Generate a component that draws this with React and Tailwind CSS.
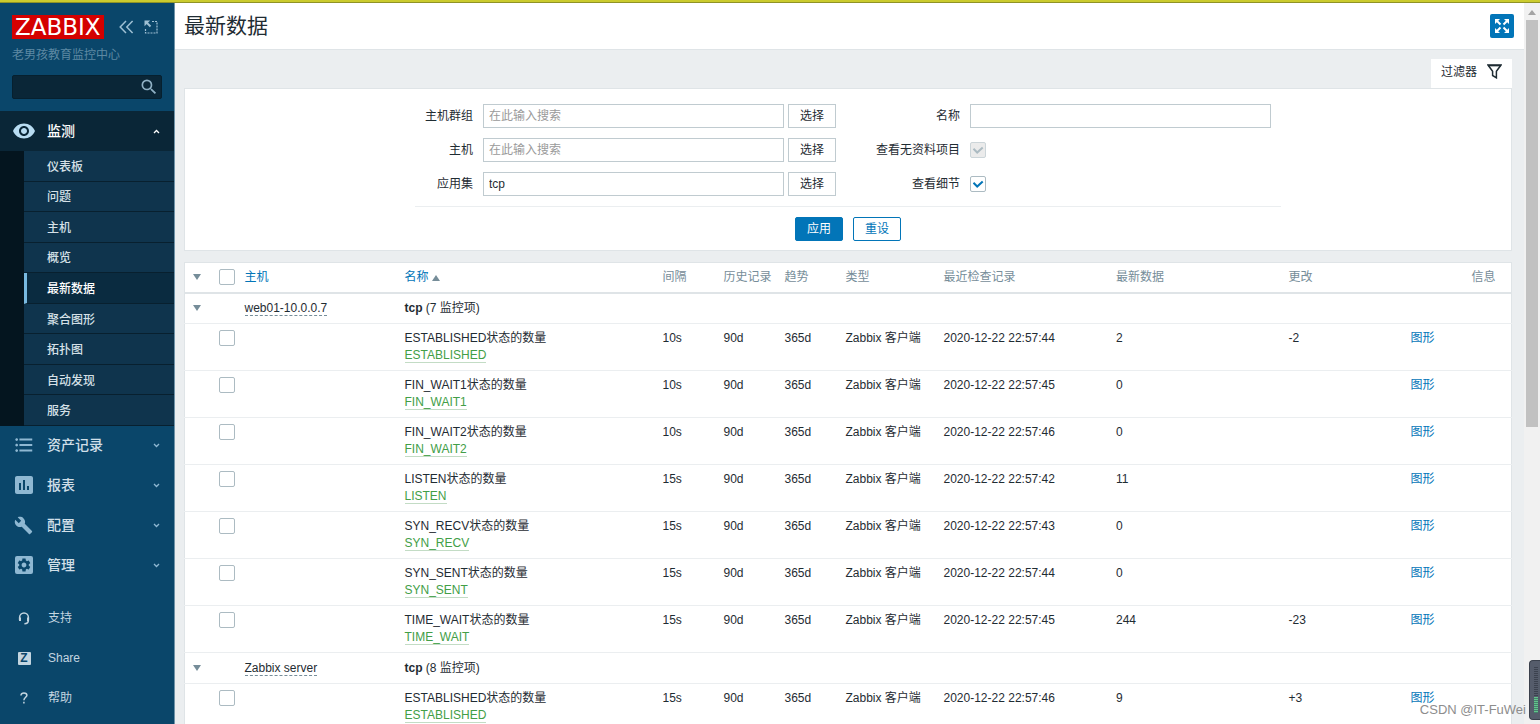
import React, { useState } from 'react';
import clsx from 'clsx';
import {
    MdVisibility,
    MdFormatListBulleted,
    MdAssessment,
    MdBuild,
    MdSettings,
    MdSearch,
} from 'react-icons/md';

const SUB_MENU = ['仪表板', '问题', '主机', '概览', '最新数据', '聚合图形', '拓扑图', '自动发现', '服务'];

const GearIcon = () => (
    <span className="flex size-[18px] items-center justify-center rounded-xs bg-[#8fb8d2] text-[#0a466a]">
        <MdSettings size={16} />
    </span>
);

const MENU = [
    { name: '资产记录', icon: <MdFormatListBulleted size={22} /> },
    { name: '报表', icon: <MdAssessment size={24} /> },
    { name: '配置', icon: <MdBuild size={19} /> },
    { name: '管理', icon: <GearIcon /> },
];

const GROUPS = [
    {
        host: 'web01-10.0.0.7',
        count: 7,
        items: [
            { key: 'ESTABLISHED', interval: '10s', time: '22:57:44', value: '2', change: '-2' },
            { key: 'FIN_WAIT1', interval: '10s', time: '22:57:45', value: '0' },
            { key: 'FIN_WAIT2', interval: '10s', time: '22:57:46', value: '0' },
            { key: 'LISTEN', interval: '15s', time: '22:57:42', value: '11' },
            { key: 'SYN_RECV', interval: '15s', time: '22:57:43', value: '0' },
            { key: 'SYN_SENT', interval: '15s', time: '22:57:44', value: '0' },
            { key: 'TIME_WAIT', interval: '15s', time: '22:57:45', value: '244', change: '-23' },
        ],
    },
    {
        host: 'Zabbix server',
        count: 8,
        items: [
            { key: 'ESTABLISHED', interval: '15s', time: '22:57:46', value: '9', change: '+3' },
        ],
    },
];

const Chevron = ({ up }) => (
    <svg width="7" height="5" viewBox="0 0 7 5" fill="none" stroke="currentColor" strokeWidth="1.3">
        <path d={up ? 'M1 4l2.5-2.5L6 4' : 'M1 1l2.5 2.5L6 1'} />
    </svg>
);

const Triangle = ({ up }) => (
    <svg className="inline-block text-[#768d99]" width="8" height="6" viewBox="0 0 8 6" fill="currentColor">
        <path d={up ? 'M0 6L4 0l4 6z' : 'M0 0h8L4 6z'} />
    </svg>
);

const CollapseIcon = () => (
    <svg width="15" height="14" viewBox="0 0 15 14" fill="none" stroke="currentColor" strokeWidth="1.5">
        <path d="M7 1L1.2 7 7 13M13.6 1L7.8 7l5.8 6" />
    </svg>
);

const HideIcon = () => (
    <svg width="14" height="14" viewBox="0 0 14 14" fill="none" stroke="currentColor">
        <path d="M8 1.5h5V13H1.5V8" strokeWidth="1.2" strokeDasharray="2 1" />
        <path d="M6.5 6.5L2 2" strokeWidth="2" />
        <path d="M.5.5h5.700L.5 6.200z" fill="currentColor" stroke="none" />
    </svg>
);

const HeadsetIcon = () => (
    <svg width="12" height="13" viewBox="0 0 12 13" fill="none" stroke="currentColor" strokeWidth="1.5">
        <path d="M1.6 8V5.500a4.400 4.400 0 018.800 0V8c0 2-1.200 3.800-4 3.800" />
        <path d="M2 5.500v3.500M10 5.500v3.500" strokeWidth="2" />
    </svg>
);

const HelpIcon = () => (
    <svg width="8" height="12" viewBox="0 0 8 12" fill="none" stroke="currentColor" strokeWidth="1.5">
        <path d="M1 3.500C1 1.800 2.200.9 3.900.9S6.900 1.900 6.900 3.300C6.900 5.200 3.900 5.400 3.900 8.200M3.900 9.800v1.700" />
    </svg>
);

const FullscreenIcon = () => (
    <svg width="16" height="16" viewBox="0 0 16 16" fill="currentColor" stroke="currentColor">
        <path d="M3 3l3.500 3.500M13 3L9.500 6.500M3 13l3.500-3.500M13 13L9.500 9.500" strokeWidth="2" />
        <path d="M1 1h5L1 6zM15 1v5l-5-5zM1 15v-5l5 5zM15 15h-5l5-5z" stroke="none" />
    </svg>
);

const FilterIcon = () => (
    <svg width="15" height="15" viewBox="0 0 15 15" fill="none" stroke="currentColor" strokeWidth="1.5">
        <path d="M1 1h13L9.400 7.200V13.800L5.600 11.500V7.200z" />
        <path d="M1 1.600h13" />
    </svg>
);

const Checkbox = ({ label, ...props }) => (
    <span className="relative inline-flex align-top">
        <input
            type="checkbox"
            aria-label={label}
            className="peer size-4 appearance-none rounded-xs border border-[#acbbc2] bg-white disabled:border-[#ccd5d9] disabled:bg-[#ebebeb]"
            {...props}
        />
        <svg
            className="pointer-events-none absolute inset-0 m-auto hidden text-[#0275b8] peer-checked:block peer-disabled:text-[#acbbc2]"
            width="12"
            height="10"
            viewBox="0 0 12 10"
            fill="none"
            stroke="currentColor"
            strokeWidth="2"
        >
            <path d="M1.5 3.800L5.200 7.500l5.500-5" />
        </svg>
    </span>
);

const Sidebar = () => {
    const [active, setActive] = useState('最新数据');

    return (
        <aside className="flex w-[175px] shrink-0 flex-col border-r border-[#6f93a8] bg-[#0a466a] text-[#c3d5e0]">
            <div className="flex items-center px-3 pt-3">
                <a href="#" className="flex h-6 items-center bg-[#d40000] px-[3px] font-['DejaVu_Sans',sans-serif] text-[23px] leading-6 text-white">
                    ZABBIX
                </a>
                <div className="ml-auto flex items-center gap-2.5 pr-1 text-[#9fc0d4]">
                    <button aria-label="收起"><CollapseIcon /></button>
                    <button aria-label="隐藏"><HideIcon /></button>
                </div>
            </div>
            <div className="px-3 pt-2 text-xs leading-4 text-[#5d89a3]">老男孩教育监控中心</div>
            <div className="mx-3 my-3 flex h-6 items-center rounded-xs border border-[#06202f] bg-[#0a2637] pr-0.5">
                <input type="text" aria-label="搜索" className="h-full w-full min-w-0 bg-transparent px-2 text-xs outline-none" />
                <button aria-label="搜索" className="text-[#8fb0c4]"><MdSearch size={20} /></button>
            </div>

            <nav>
                <button className="flex h-10 w-full items-center bg-[#0a2637] pr-3.5 text-sm font-medium text-white">
                    <span className="flex w-[47px] justify-center text-[#b8dcf2]"><MdVisibility size={24} /></span>
                    监测
                    <span className="ml-auto"><Chevron up /></span>
                </button>
                <div className="grid h-[275px] auto-rows-fr border-l-[24px] border-[#04151f]">
                    {SUB_MENU.map((name) => (
                        <a
                            key={name}
                            href="#"
                            onClick={() => setActive(name)}
                            className={clsx(
                                'flex items-center border-b border-b-[#08202f] pt-0.5 text-xs font-medium',
                                active === name
                                    ? 'border-l-3 border-l-[#78b9e0] bg-[#0a2b40] pl-5 text-white'
                                    : 'bg-[#0f344d] pl-[23px] text-[#d5e0e7]'
                            )}
                        >
                            {name}
                        </a>
                    ))}
                </div>
                {MENU.map((e) => (
                    <button key={e.name} className="flex h-10 w-full items-center pr-3.5 pb-0.5 text-sm font-medium text-[#d0dfe8]">
                        <span className="flex w-[47px] justify-center text-[#8fb8d2]">{e.icon}</span>
                        {e.name}
                        <span className="ml-auto text-[#8fb8d2]"><Chevron /></span>
                    </button>
                ))}
            </nav>

            <nav className="mt-3 text-xs">
                <a href="#" className="flex h-10 items-center"><span className="flex w-12 justify-center"><HeadsetIcon /></span>支持</a>
                <a href="#" className="flex h-10 items-center">
                    <span className="flex w-12 justify-center">
                        <span className="flex size-[13px] items-center justify-center rounded-[1px] bg-[#c3d5e0] text-xs leading-none font-bold text-[#0a466a]">Z</span>
                    </span>
                    Share
                </a>
                <a href="#" className="flex h-10 items-center"><span className="flex w-12 justify-center"><HelpIcon /></span>帮助</a>
            </nav>
        </aside>
    );
};

const FilterField = ({ id, label, ...props }) => (
    <div className="flex h-6 items-center">
        <label htmlFor={id} className="mr-2.5 w-[58px] text-right">{label}</label>
        <input
            id={id}
            type="text"
            className="mr-1 h-6 min-w-0 flex-1 border border-[#c0cbd0] px-[5px] placeholder:text-[#9a9a9a]"
            {...props}
        />
        <button type="button" className="h-6 w-12 shrink-0 border border-[#c0cbd0]">选择</button>
    </div>
);

const Filter = () => {
    return (
        <form className="border border-[#dfe4e7] bg-white pt-[15px] pb-[9px]" onSubmit={(e) => e.preventDefault()}>
            <div className="mx-auto max-w-[866px]">
                <div className="grid grid-cols-2 border-b border-[#ebeef0] pb-2.5">
                    <div className="flex flex-col gap-2.5 pr-3">
                        <FilterField id="groups" label="主机群组" placeholder="在此输入搜索" />
                        <FilterField id="hosts" label="主机" placeholder="在此输入搜索" />
                        <FilterField id="application" label="应用集" defaultValue="tcp" />
                    </div>
                    <div className="flex flex-col gap-2.5 pr-2.5">
                        <div className="flex h-6 items-center">
                            <label htmlFor="name" className="mr-2.5 w-28 text-right">名称</label>
                            <input id="name" type="text" className="h-6 min-w-0 flex-1 border border-[#c0cbd0] px-[5px]" />
                        </div>
                        <div className="flex h-6 items-center">
                            <label htmlFor="without_data" className="mr-2.5 w-28 text-right">查看无资料项目</label>
                            <Checkbox id="without_data" defaultChecked disabled />
                        </div>
                        <div className="flex h-6 items-center">
                            <label htmlFor="details" className="mr-2.5 w-28 text-right">查看细节</label>
                            <Checkbox id="details" defaultChecked />
                        </div>
                    </div>
                </div>
                <div className="flex justify-center gap-2.5 pt-2.5">
                    <button type="submit" className="h-6 w-12 rounded-xs border border-[#0275b8] bg-[#0275b8] text-white">应用</button>
                    <button type="reset" className="h-6 w-12 rounded-xs border border-[#0275b8] bg-white text-[#0275b8]">重设</button>
                </div>
            </div>
        </form>
    );
};

const ItemRow = ({ item }) => (
    <tr className="border-b border-[#ebeef0] align-top *:px-2 *:py-1.5">
        <td></td>
        <td><Checkbox label={item.key} /></td>
        <td></td>
        <td>
            {item.key}状态的数量
            <br />
            <a href="#" className="border-b border-[#c3dcc5] text-[#429e47]">{item.key}</a>
        </td>
        <td>{item.interval}</td>
        <td>90d</td>
        <td>365d</td>
        <td>Zabbix 客户端</td>
        <td>2020-12-22 {item.time}</td>
        <td>{item.value}</td>
        <td>{item.change}</td>
        <td><a href="#" className="text-[#0275b8]">图形</a></td>
        <td></td>
    </tr>
);

const LatestTable = () => {
    return (
        <table className="w-full table-fixed border border-[#dfe4e7] bg-white text-left leading-[17px]">
            <colgroup>
                <col className="w-[26px]" />
                <col className="w-[26px]" />
                <col className="w-40" />
                <col />
                <col className="w-[61px]" />
                <col className="w-[61px]" />
                <col className="w-[61px]" />
                <col className="w-[98px]" />
                <col className="w-[13%]" />
                <col className="w-[13%]" />
                <col className="w-[122px]" />
                <col className="w-[61px]" />
                <col className="w-12" />
            </colgroup>
            <thead>
                <tr className="h-[30px] border-b-2 border-[#dfe4e7] whitespace-nowrap text-[#768d99] *:px-2 *:font-normal">
                    <th><button aria-label="全部折叠" className="flex"><Triangle /></button></th>
                    <th><Checkbox label="全选" /></th>
                    <th><a href="#" className="text-[#0275b8]">主机</a></th>
                    <th><a href="#" className="text-[#0275b8]">名称 <Triangle up /></a></th>
                    <th>间隔</th>
                    <th>历史记录</th>
                    <th>趋势</th>
                    <th>类型</th>
                    <th>最近检查记录</th>
                    <th>最新数据</th>
                    <th>更改</th>
                    <th></th>
                    <th>信息</th>
                </tr>
            </thead>
            {GROUPS.map((group) => (
                <tbody key={group.host}>
                    <tr className="h-[31px] border-b border-[#ebeef0] *:px-2">
                        <td><button aria-label="折叠" className="flex"><Triangle /></button></td>
                        <td></td>
                        <td><a href="#" className="border-b border-dashed border-[#768d99]">{group.host}</a></td>
                        <td colSpan={10}><b>tcp</b> ({group.count} 监控项)</td>
                    </tr>
                    {group.items.map((item) => (
                        <ItemRow key={item.key} item={item} />
                    ))}
                </tbody>
            ))}
        </table>
    );
};

const ScrollTrack = () => (
    <div className="flex w-4 shrink-0 flex-col items-center bg-[#f1f1f1] pt-[7px]">
        <svg width="8" height="5" viewBox="0 0 8 5" fill="#a3a3a3"><path d="M0 5l4-5 4 5z" /></svg>
        <div className="mt-[5px] h-[57%] w-3 bg-[#c1c1c1]"></div>
    </div>
);

const LevelMeter = () => (
    <div className="absolute right-0 bottom-1 flex h-[60px] w-[11px] flex-col justify-end rounded-l-sm border border-r-0 border-[#3a404c] bg-[#555c6b] py-1.5 pl-1">
        <div className="w-1 flex-1 bg-[repeating-linear-gradient(to_bottom,#3c424f_0_1px,#555c6b_1px_2px)]"></div>
        <div className="h-4 w-1 bg-[repeating-linear-gradient(to_bottom,#63c58c_0_1px,#45806b_1px_2px)]"></div>
    </div>
);

export default function App() {
    return (
        <div className="relative flex h-screen flex-col overflow-hidden bg-[#ebeef0] font-['Liberation_Sans','Noto_Sans_CJK_SC',sans-serif] text-xs text-[#1f2c33]">
            <div className="h-[3px] shrink-0 border-b border-[#8f9326] bg-[#cbcb2e]"></div>
            <div className="flex min-h-0 flex-1">
                <Sidebar />
                <div className="min-w-0 flex-1 overflow-hidden">
                    <header className="flex h-[47px] items-center justify-between border-b border-[#dfe4e7] bg-white pr-2.5 pl-[9px]">
                        <h1 className="text-[21px]">最新数据</h1>
                        <button aria-label="全屏" className="flex size-6 items-center justify-center rounded-xs bg-[#0275b8] text-white">
                            <FullscreenIcon />
                        </button>
                    </header>
                    <main className="pt-[9px] pr-3 pl-[9px]">
                        <div className="flex justify-end">
                            <button className="flex h-[29px] items-center gap-2.5 bg-white px-2.5 pb-1">
                                过滤器 <FilterIcon />
                            </button>
                        </div>
                        <Filter />
                        <div className="pt-[11px]">
                            <LatestTable />
                        </div>
                    </main>
                </div>
                <ScrollTrack />
            </div>
            <div className="absolute right-3.5 bottom-1 text-[13px] leading-5 text-[#8d8d8d]">CSDN @IT-FuWei</div>
            <LevelMeter />
        </div>
    );
}
